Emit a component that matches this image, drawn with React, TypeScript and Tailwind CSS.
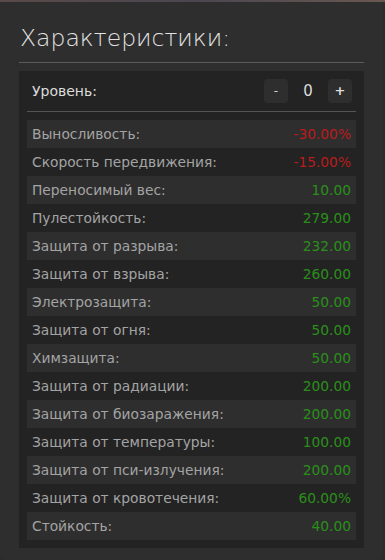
const stats = [
  { label: "Выносливость:", value: "-30.00%", bad: true },
  { label: "Скорость передвижения:", value: "-15.00%", bad: true },
  { label: "Переносимый вес:", value: "10.00" },
  { label: "Пулестойкость:", value: "279.00" },
  { label: "Защита от разрыва:", value: "232.00" },
  { label: "Защита от взрыва:", value: "260.00" },
  { label: "Электрозащита:", value: "50.00" },
  { label: "Защита от огня:", value: "50.00" },
  { label: "Химзащита:", value: "50.00" },
  { label: "Защита от радиации:", value: "200.00" },
  { label: "Защита от биозаражения:", value: "200.00" },
  { label: "Защита от температуры:", value: "100.00" },
  { label: "Защита от пси-излучения:", value: "200.00" },
  { label: "Защита от кровотечения:", value: "60.00%" },
  { label: "Стойкость:", value: "40.00" },
];

export default function App() {
  return (
    <div
      className="min-h-[560px] bg-[#2b2b2b]"
      style={{ fontFamily: '"DejaVu Sans", "Open Sans", sans-serif' }}
    >
      <div className="h-[2px] bg-gradient-to-r from-[#5a4a48] via-[#4a4650] to-[#6a5850]" />
      <div className="mr-[2px] rounded-b-md bg-[#2e2e2e] px-[19px] pb-3">
        <h2 className="pt-[22px] pb-[10px] pl-[1px] text-[23.5px] leading-[28px] font-light text-[#e2e2e2]">
          Характеристики:
        </h2>
        <div className="h-px bg-[#5c5c5c]" />
        <div className="mt-2 bg-[#232323] px-2 pb-2">
          <div className="flex h-10 items-center pl-[5px] pr-1">
            <span className="text-[14px] text-[#dcdcdc]">Уровень:</span>
            <div className="ml-auto flex items-center">
              <button className="flex h-6 w-6 items-center justify-center rounded bg-[#2e2e2e] text-[12px] text-[#cfcfcf]">
                -
              </button>
              <span className="w-10 text-center text-[15px] text-[#dcdcdc]">0</span>
              <button className="flex h-6 w-6 items-center justify-center rounded bg-[#2e2e2e] text-[13px] font-bold text-[#dcdcdc]">
                +
              </button>
            </div>
          </div>
          <div className="h-px bg-[#555555]" />
          <div className="mt-2 flex flex-col">
            {stats.map((s, i) => (
              <div
                key={i}
                className={`flex h-7 items-center justify-between px-[5px] text-[13.8px] ${
                  i % 2 === 0 ? "bg-[#2e2e2e]" : ""
                }`}
              >
                <span className="text-[#a4a4a4]">{s.label}</span>
                <span className={s.bad ? "text-[#b81c1c]" : "text-[#2a8f1a]"}>{s.value}</span>
              </div>
            ))}
          </div>
        </div>
      </div>
    </div>
  );
}
